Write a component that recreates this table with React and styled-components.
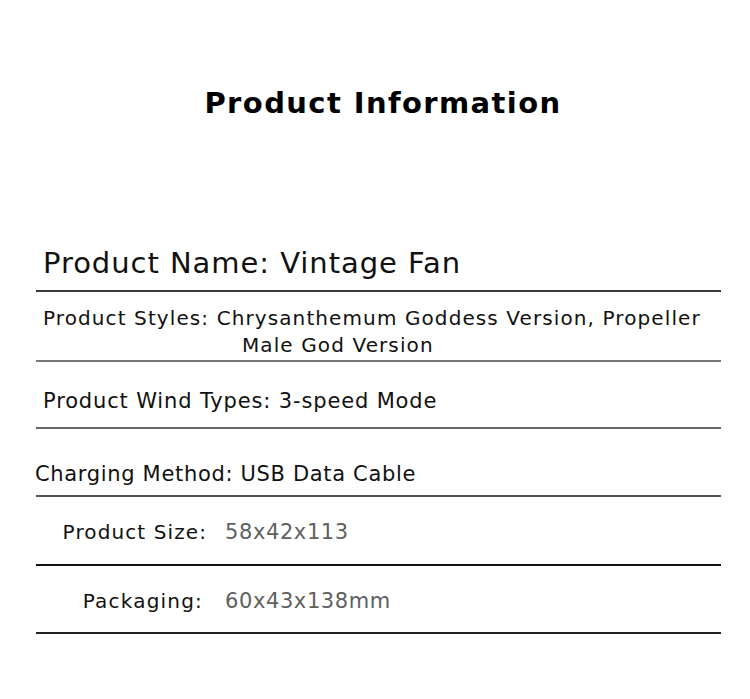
import styled, { createGlobalStyle } from 'styled-components'

const GlobalStyle = createGlobalStyle`
  body {
    margin: 0;
    background: #fff;
    font-family: "DejaVu Sans", Verdana, sans-serif;
    color: #111;
  }
`

const simpleRows = [
  { text: 'Product Wind Types: 3-speed Mode', size: 21, spacing: 0.85, height: 67, pb: 15, tone: '#666', left: 7 },
  { text: 'Charging Method: USB Data Cable', size: 21, spacing: 0.67, height: 68, pb: 10, tone: '#555', left: -1 },
]

function App() {
  return (
    <Page>
      <GlobalStyle />
      <Title>Product Information</Title>
      <Table>
        <Row height={62} pb={12} tone="#3a3a3a">
          <Text size={29} spacing={0.95} left={7}>Product Name: Vintage Fan</Text>
        </Row>
        <Row height={70} pb={1} tone="#777">
          <Text size={20} spacing={1.1} left={7}>
            <Line>Product Styles: Chrysanthemum Goddess Version, Propeller</Line>
            <Line indent={199}>Male God Version</Line>
          </Text>
        </Row>
        {simpleRows.map(r => (
          <Row key={r.text} height={r.height} pb={r.pb} tone={r.tone}>
            <Text size={r.size} spacing={r.spacing} left={r.left}>{r.text}</Text>
          </Row>
        ))}
        <Row height={69} pb={21} tone="#111">
          <Pair>
            <Label>Product Size:</Label>
            <Value>58x42x113</Value>
          </Pair>
        </Row>
        <Row height={68} pb={20} tone="#222">
          <Pair>
            <Label trail={4} spacing={1.2}>Packaging:</Label>
            <Value>60x43x138mm</Value>
          </Pair>
        </Row>
      </Table>
    </Page>
  )
}

export default App

const Page = styled.div`
  width: 750px;
  height: 699px;
  padding-top: 89px;
  box-sizing: border-box;
`

const Title = styled.h1`
  margin: 0;
  font-size: 29px;
  line-height: 1;
  font-weight: 700;
  letter-spacing: 1.4px;
  text-align: center;
  color: #000;
  padding-left: 16px;
`

const Table = styled.div`
  margin: 112px 29px 0 36px;
`

const Row = styled.div`
  box-sizing: border-box;
  height: ${({ height }) => height}px;
  padding-bottom: ${({ pb }) => pb}px;
  display: flex;
  align-items: flex-end;
  border-bottom: 2px solid ${({ tone }) => tone};
`

const Text = styled.div`
  font-size: ${({ size }) => size}px;
  letter-spacing: ${({ spacing }) => spacing}px;
  line-height: 1;
  margin-left: ${({ left }) => left}px;
  white-space: nowrap;
  color: #111;
`

const Line = styled.div`
  line-height: 27px;
  padding-left: ${({ indent = 0 }) => indent}px;
`

const Pair = styled.div`
  display: grid;
  grid-template-columns: 171px auto;
  column-gap: 18px;
  align-items: baseline;
  font-size: 20px;
  line-height: 1;
`

const Label = styled.span`
  text-align: right;
  letter-spacing: ${({ spacing = 1.1 }) => spacing}px;
  padding-right: ${({ trail = 0 }) => trail}px;
  color: #111;
`

const Value = styled.span`
  color: #606060;
  font-size: 21px;
  letter-spacing: 0.6px;
`
